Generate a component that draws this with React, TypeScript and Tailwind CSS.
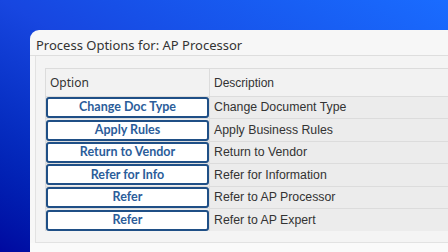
import React from "react";

const rows = [
  { option: "Change Doc Type", description: "Change Document Type" },
  { option: "Apply Rules", description: "Apply Business Rules" },
  { option: "Return to Vendor", description: "Return to Vendor" },
  { option: "Refer for Info", description: "Refer for Information" },
  { option: "Refer", description: "Refer to AP Processor" },
  { option: "Refer", description: "Refer to AP Expert" },
];

export default function App() {
  return (
    <div className="w-[448px] h-[252px] overflow-hidden bg-gradient-to-bl from-[#1a6cff] via-[#1746e0] to-[#0008a0] pl-[30px] pt-[30px] flex">
      <div className="flex-1 bg-[#f7f7f7] rounded-tl-[9px] flex flex-col">
        {/* Title */}
        <div className="h-[26px] border-b border-[#dedede] pl-[6px] pt-[7px] text-[13px] leading-[16px] text-[#333] font-['Noto_Sans',sans-serif]">
          Process Options for: AP Processor
        </div>

        {/* Content frame */}
        <div className="ml-[5px] h-[187px] border-l border-b border-[#e2e2e2] bg-[#f4f4f4] pt-[12px] pl-[9px] flex flex-col">
          <div className="border-t border-l border-[#dcdcdc] text-[12px] text-[#333]">
            <div className="flex h-[28px] bg-[#f2f2f2] border-b border-[#dcdcdc]">
              <div className="w-[164px] shrink-0 border-r border-[#dcdcdc] pl-[4px] flex items-center font-['Noto_Sans',sans-serif]">
                Option
              </div>
              <div className="flex-1 pl-[4px] flex items-center font-['Liberation_Sans',sans-serif]">
                Description
              </div>
            </div>
            {rows.map((row, i) => (
              <div key={i} className="flex h-[22.4px] bg-[#ececec] border-b border-[#dcdcdc] last:border-b-0">
                <div className="w-[164px] shrink-0 border-r border-[#dcdcdc] flex items-center">
                  <button className="w-[163px] h-[21px] bg-white border-2 border-[#1f4f86] rounded-[3px] text-[12.5px] font-bold text-[#2b5d9a] font-['Lato',sans-serif] leading-none">
                    {row.option}
                  </button>
                </div>
                <div className="flex-1 pl-[4px] flex items-center text-[12.3px] font-['Liberation_Sans',sans-serif]">
                  {row.description}
                </div>
              </div>
            ))}
          </div>
        </div>
        <div className="flex-1 bg-[#fafafa]" />
      </div>
    </div>
  );
}
